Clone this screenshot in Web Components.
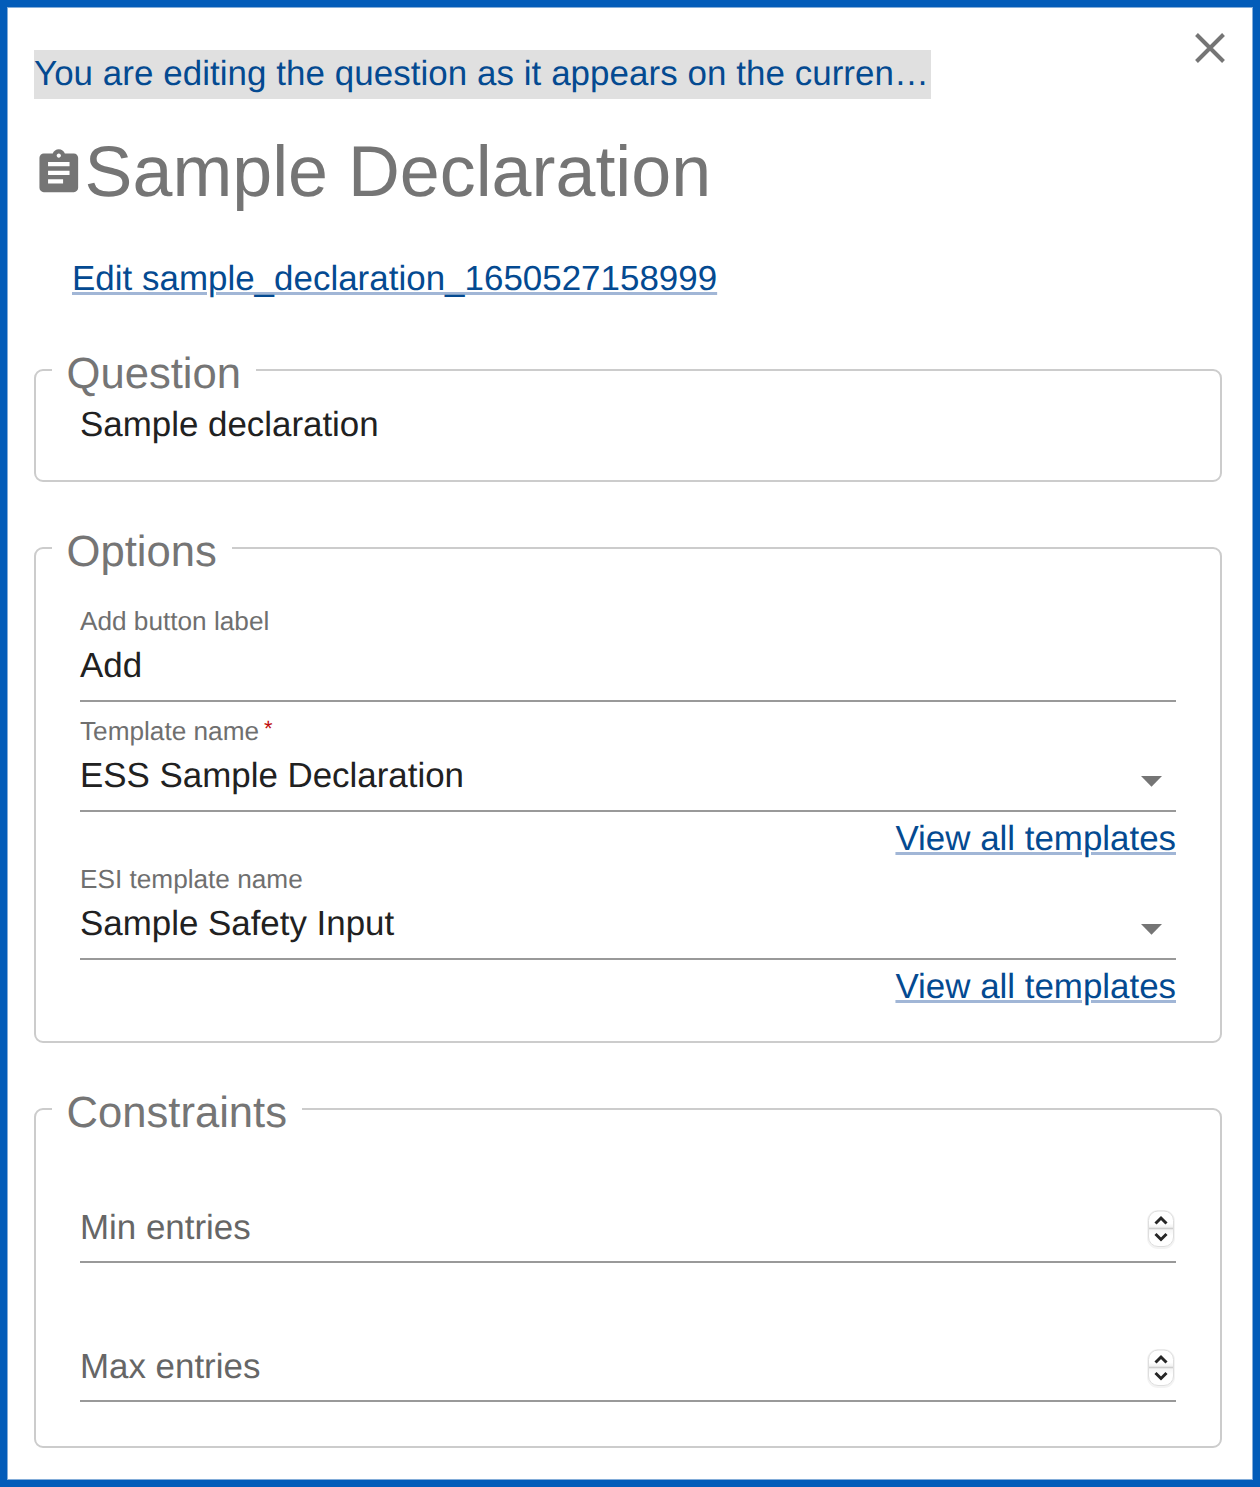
<!DOCTYPE html>
<html lang="en">
<head>
<meta charset="utf-8">
<title>Sample Declaration</title>
<style>
html, body { margin: 0; height: 100%; }
body { font: 34.9px/40px "Liberation Sans", Arial, sans-serif; color: #212121; text-rendering: geometricPrecision; }
</style>
</head>
<body>
<question-editor>
  <editor-header slot="header" name="Sample Declaration">You are editing the question as it appears on the curren…</editor-header>
  <text-link slot="header" style="margin: 48px 0 0 38px; letter-spacing: .03px">Edit sample_declaration_1650527158999</text-link>
  <field-group label="Question" style="height:137px"><div style="padding-top:10px">Sample declaration</div></field-group>
  <field-group label="Options" style="height:520px">
    <form-field label="Add button label" style="margin-top:33px">Add</form-field>
    <form-field label="Template name" required kind="select" style="margin-top:14px">ESS Sample Declaration</form-field>
    <text-link align="end" style="margin-top:7px">View all templates</text-link>
    <form-field label="ESI template name" kind="select" style="margin-top:5px">Sample Safety Input</form-field>
    <text-link align="end" style="margin-top:7px">View all templates</text-link>
  </field-group>
  <field-group label="Constraints" style="height:364px">
    <form-field kind="number" style="margin-top:74px">Min entries</form-field>
    <form-field kind="number" style="margin-top:84px">Max entries</form-field>
  </field-group>
</question-editor>
<script>
class BaseElement extends HTMLElement {
  connectedCallback() {
    if (!this.shadowRoot) this.attachShadow({ mode: "open" }).innerHTML = this.render();
  }
}

customElements.define("question-editor", class extends BaseElement {
  render() {
    return `<style>
      :host { display: block; box-sizing: border-box; height: 1487px; border: 7px solid #035cb9; background: #fff; }
      main { box-sizing: border-box; height: 100%; border: 1px solid #84add9; padding: 0 30px 0 26px; display: flex; flex-direction: column; }
      header { height: 337px; display: flex; flex-direction: column; align-items: flex-start; }
      .groups { display: flex; flex-direction: column; gap: 41px; }
    </style>
    <main><header><slot name="header"></slot></header><div class="groups"><slot></slot></div></main>`;
  }
});

customElements.define("editor-header", class extends BaseElement {
  render() {
    return `<style>
      :host { display: block; align-self: stretch; }
      .top { display: flex; justify-content: space-between; align-items: flex-start; padding-top: 24px; height: 68px; }
      .notice { box-sizing: border-box; width: 897px; height: 49px; margin-top: 18px; padding: 4px 0 0 0; background: #e0e0e0; color: #044a91; white-space: nowrap; overflow: hidden; letter-spacing: .07px; }
      .close { margin-right: -4px; flex: none; }
      h1 { margin: 31px 0 0; height: 80px; display: flex; align-items: flex-start; color: #757575; font-weight: 400; font-size: 71.8px; line-height: 82px; white-space: nowrap; }
      h1 svg { flex: none; margin: 16px 0 0 -1px; }
      svg { display: block; }
    </style>
    <div class="top"><div class="notice"><slot></slot></div>
      <svg class="close" width="32" height="32" viewBox="0 0 32 32"><path d="M2.500 2.500L29.500 29.500M29.500 2.500L2.500 29.500" stroke="#757575" stroke-width="4" fill="none"/></svg>
    </div>
    <h1><svg width="51.6" height="51.6" viewBox="0 0 24 24" fill="#757575"><path d="M19 3h-4.180C14.400 1.840 13.300 1 12 1c-1.300 0-2.400.840-2.820 2H5c-1.100 0-2 .900-2 2v14c0 1.100.900 2 2 2h14c1.100 0 2-.900 2-2V5c0-1.100-.900-2-2-2zm-7 0c.550 0 1 .450 1 1s-.450 1-1 1-1-.450-1-1 .450-1 1-1zm2 14H7v-2h7v2zm3-4H7v-2h10v2zm0-4H7V7h10v2z"/></svg><span>${this.getAttribute("name")}</span></h1>`;
  }
});

customElements.define("text-link", class extends BaseElement {
  render() {
    return `<style>
      :host { display: block; height: 40px; white-space: nowrap; }
      :host([align="end"]) { text-align: right; }
      a { color: #044a91; text-decoration: underline 3px #a1b6d6; text-underline-offset: 2px; }
    </style><a href="#"><slot></slot></a>`;
  }
});

customElements.define("field-group", class extends BaseElement {
  render() {
    return `<style>
      :host { display: block; }
      fieldset { box-sizing: border-box; height: 100%; margin: 0; min-width: 0; border: 2px solid #cccccc; border-radius: 9px; padding: 0; }
      legend { margin-left: 16px; padding: 9px 15px 0 14.5px; font-size: 43.6px; line-height: 41px; color: #757575; }
      .body { padding: 0 44px; display: flex; flex-direction: column; }
    </style>
    <fieldset><legend>${this.getAttribute("label")}</legend><div class="body"><slot></slot></div></fieldset>`;
  }
});

customElements.define("form-field", class extends BaseElement {
  icon() {
    const kind = this.getAttribute("kind");
    if (kind === "select")
      return `<svg width="21" height="11" viewBox="0 0 21 11" style="margin:10px 14px 0 0"><path d="M0 0h21L10.500 10.800z" fill="#757575"/></svg>`;
    if (kind === "number")
      return `<svg width="30" height="42" viewBox="0 0 30 42" style="margin-top:1px"><defs><linearGradient id="g" x2="0" y2="1"><stop offset="0" stop-color="#fff"/><stop offset=".35" stop-color="#fff"/><stop offset=".49" stop-color="#eee"/><stop offset=".52" stop-color="#f5f5f5"/><stop offset=".7" stop-color="#fff"/></linearGradient></defs>
        <rect x="2" y="3" width="26" height="37" rx="10" fill="none" stroke="#f3f3f3" stroke-width="2"/>
        <rect x="2.500" y="3" width="25" height="35.500" rx="9.500" fill="url(#g)" stroke="#dedede"/>
        <path d="M3 20.500h24" stroke="#cfcfcf" stroke-width="1.600"/>
        <path d="M9.500 15.500l5.500-5.500 5.500 5.500M9.500 26l5.500 5.500 5.500-5.500" fill="none" stroke="#262626" stroke-width="3"/></svg>`;
    return "";
  }
  render() {
    const label = this.getAttribute("label");
    const mark = this.hasAttribute("required") ? `<sup>*</sup>` : "";
    return `<style>
      :host { display: block; }
      label { display: flex; height: 30px; margin-bottom: 10px; font-size: 26.2px; line-height: 30px; color: #6f6f6f; }
      sup { margin-left: 5px; font-size: 22px; line-height: 25px; color: #c00d0d; vertical-align: baseline; }
      .value { display: flex; justify-content: space-between; align-items: center; height: 40px; padding-bottom: 14px; border-bottom: 2px solid #999; white-space: nowrap; }
      :host([kind="number"]) .value { padding-bottom: 13px; color: #666; }
      svg { display: block; flex: none; }
    </style>
    ${label ? `<label>${label}${mark}</label>` : ""}<div class="value"><span><slot></slot></span>${this.icon()}</div>`;
  }
});
</script>
</body>
</html>
